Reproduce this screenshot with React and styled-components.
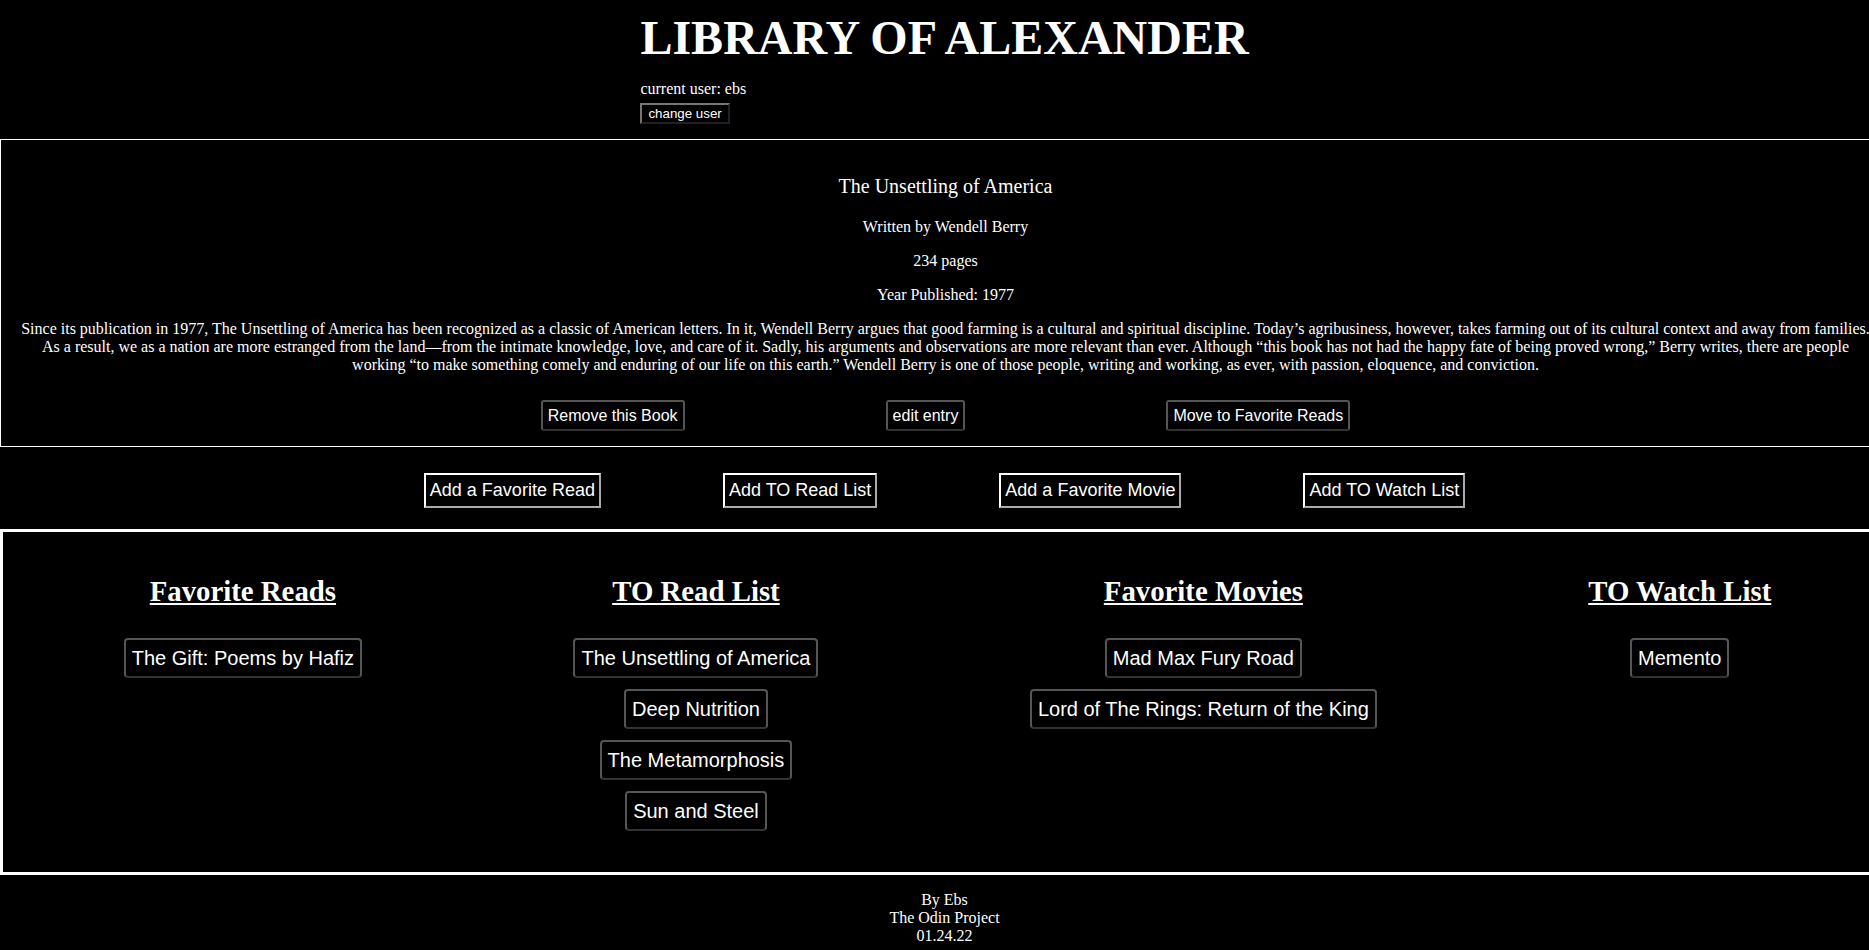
import styled, { createGlobalStyle } from 'styled-components';

const GlobalStyle = createGlobalStyle`
    html, body {
        margin: 0;
        background: #000;
        overflow-x: hidden;
    }
    body {
        color: #fff;
        font-family: "Liberation Serif", "Times New Roman", serif;
        font-size: 16px;
    }
`;

const description = 'Since its publication in 1977, The Unsettling of America has been recognized as a classic of American letters. In it, Wendell Berry argues that good farming is a cultural and spiritual discipline. Today\u2019s agribusiness, however, takes farming out of its cultural context and away from families. As a result, we as a nation are more estranged from the land\u2014from the intimate knowledge, love, and care of it. Sadly, his arguments and observations are more relevant than ever. Although \u201Cthis book has not had the happy fate of being proved wrong,\u201D Berry writes, there are people working \u201Cto make something comely and enduring of our life on this earth.\u201D Wendell Berry is one of those people, writing and working, as ever, with passion, eloquence, and conviction.';

const lists = [
    { title: 'Favorite Reads', items: ['The Gift: Poems by Hafiz'] },
    { title: 'TO Read List', items: ['The Unsettling of America', 'Deep Nutrition', 'The Metamorphosis', 'Sun and Steel'] },
    { title: 'Favorite Movies', items: ['Mad Max Fury Road', 'Lord of The Rings: Return of the King'] },
    { title: 'TO Watch List', items: ['Memento'] },
];

const addButtons = ['Add a Favorite Read', 'Add TO Read List', 'Add a Favorite Movie', 'Add TO Watch List'];

const App = () => {
    return (
        <>
            <GlobalStyle />
            <Header>
                <HeaderInner>
                    <Title>LIBRARY OF ALEXANDER</Title>
                    <UserLine>current user: ebs</UserLine>
                    <SmallButton>change user</SmallButton>
                </HeaderInner>
            </Header>

            <BookCard>
                <BookTitle>The Unsettling of America</BookTitle>
                <Detail>Written by Wendell Berry</Detail>
                <Detail>234 pages</Detail>
                <Detail>Year Published: 1977</Detail>
                <Detail>{description}</Detail>
                <CardActions>
                    <CardButton>Remove this Book</CardButton>
                    <CardButton>edit entry</CardButton>
                    <CardButton>Move to Favorite Reads</CardButton>
                </CardActions>
            </BookCard>

            <AddRow>
                {addButtons.map((label) => (
                    <AddButton key={label}>{label}</AddButton>
                ))}
            </AddRow>

            <ListsPanel>
                {lists.map((list) => (
                    <ListColumn key={list.title}>
                        <ListHeading>{list.title}</ListHeading>
                        {list.items.map((item) => (
                            <ItemButton key={item}>{item}</ItemButton>
                        ))}
                    </ListColumn>
                ))}
            </ListsPanel>

            <Footer>
                By Ebs<br />
                The Odin Project<br />
                01.24.22
            </Footer>
        </>
    );
}

const Header = styled.header`
    width: 100%;
    padding: 10px 10px 0;
    display: flex;
    justify-content: center;
`

const HeaderInner = styled.div`
    display: flex;
    flex-direction: column;
    align-items: flex-start;
`

const Title = styled.h1`
    margin: 0;
    font-size: 48px;
    font-weight: bold;
    color: #fff;
`

const UserLine = styled.p`
    margin: 15px 0 5px;
`

const SmallButton = styled.button`
    font-family: "Liberation Sans", Arial, sans-serif;
    font-size: 13.33px;
    color: #fff;
    background: #000;
    border: 2px outset #767676;
    padding: 1px 6px;
`

const BookCard = styled.section`
    width: calc(100% - 10px);
    margin-top: 15px;
    padding: 15px;
    border: 1px solid #fff;
    text-align: center;
`

const BookTitle = styled.p`
    margin: 20px 0;
    font-size: 20px;
`

const Detail = styled.p`
    margin: 16px 0;
`

const CardActions = styled.div`
    display: flex;
    justify-content: center;
    gap: 201px;
    margin-top: 26px;
`

const CardButton = styled.button`
    font-family: "Liberation Sans", Arial, sans-serif;
    font-size: 16px;
    color: #fff;
    background: #000;
    border: 2px solid #555;
    border-bottom-color: #333;
    border-radius: 3px;
    padding: 4.5px 5px;
`

const AddRow = styled.div`
    width: 100%;
    padding: 0 10px;
    margin: 26px 0 21px;
    display: flex;
    justify-content: center;
    gap: 122px;
`

const AddButton = styled.button`
    font-family: "Liberation Sans", Arial, sans-serif;
    font-size: 18px;
    color: #fff;
    background: #000;
    border: 2px outset #fff;
    padding: 5px 4px;
`

const ListsPanel = styled.section`
    width: calc(100% - 10px);
    padding: 43px 15px 41px;
    border: 3px solid #fff;
    display: flex;
    justify-content: space-around;
    align-items: flex-start;
`

const ListColumn = styled.div`
    display: flex;
    flex-direction: column;
    align-items: center;
    gap: 11px;
`

const ListHeading = styled.h2`
    margin: 0 0 19px;
    font-size: 28.8px;
    font-weight: bold;
    text-decoration: underline;
`

const ItemButton = styled.button`
    font-family: "Liberation Sans", Arial, sans-serif;
    font-size: 20px;
    color: #fff;
    background: #000;
    border: 2px solid #555;
    border-bottom-color: #333;
    border-radius: 4px;
    padding: 6.5px 6px;
`

const Footer = styled.footer`
    width: 100%;
    padding: 0 10px;
    margin: 16px 0;
    text-align: center;
    line-height: normal;
`

export default App;
